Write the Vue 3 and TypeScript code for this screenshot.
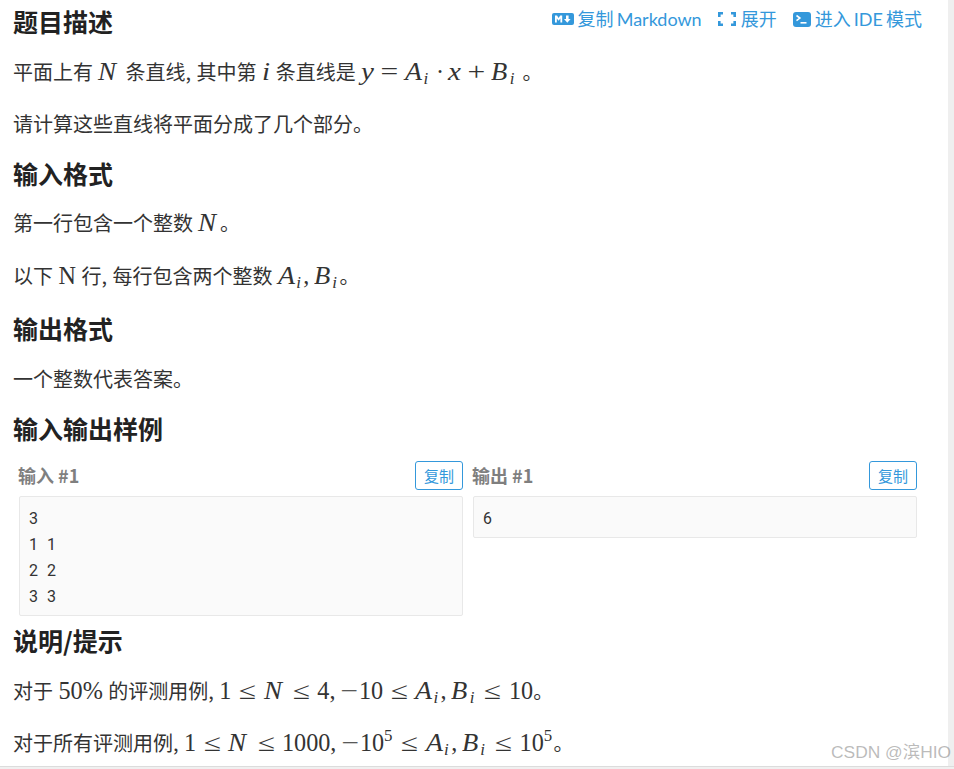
<script setup lang="ts">
const samples = [
  { title: '输入 #1', code: '3\n1 1\n2 2\n3 3' },
  { title: '输出 #1', code: '6' },
]
</script>

<template>
  <div class="page">
    <main class="content">
      <div class="head-row">
        <h2>题目描述</h2>
        <div class="actions">
          <a class="action">
            <svg width="22" height="12" viewBox="0 0 22 12"><rect width="22" height="12" rx="2" fill="#3498db"/><path d="M3 9.5V2.5h2l1.6 2.4L8.2 2.5h2v7H8.4V5.4L6.6 7.8 4.8 5.4v4.1z M14 2.5h2.6v3.4h2L15.3 9.8 12 5.9h2z" fill="#fff"/></svg>
            复制 Markdown
          </a>
          <a class="action expand">
            <svg width="18" height="14" viewBox="0 0 18 14" fill="none" stroke="#3498db" stroke-width="2.6"><path d="M1.3 5V1.3H5M13 1.3h3.7V5M16.7 9v3.7H13M5 12.7H1.3V9"/></svg>
            展开
          </a>
          <a class="action">
            <svg width="18" height="15" viewBox="0 0 18 15"><rect width="18" height="15" rx="3" fill="#3498db"/><path d="M3.5 3.5l3.4 2.6-3.4 2.6" fill="none" stroke="#fff" stroke-width="1.6"/><path d="M7.5 10.8h6" stroke="#fff" stroke-width="1.6"/></svg>
            进入 IDE 模式
          </a>
        </div>
      </div>

      <p>平面上有 <span class="m"><i class="v-n">N</i></span> 条直线, 其中第 <span class="m"><i class="v-i">i</i></span> 条直线是 <span class="m"><i class="v-y">y</i><b class="rel">=</b><i class="v-a">A</i><sub>i</sub><b class="bin dot">·</b><i class="v-x">x</i><b class="bin">+</b><i class="v-b">B</i><sub>i</sub></span> 。</p>
      <p class="before-h">请计算这些直线将平面分成了几个部分。</p>

      <h2 class="gap-20">输入格式</h2>
      <p class="gap-23">第一行包含一个整数 <span class="m"><i class="v-n">N</i></span>。</p>
      <p class="gap-22">以下 <span class="m">N</span> 行, 每行包含两个整数 <span class="m"><i class="v-a">A</i><sub>i</sub><span class="comma">,</span><i class="v-b">B</i><sub>i</sub></span>。</p>

      <h2 class="gap-21">输出格式</h2>
      <p class="before-h">一个整数代表答案。</p>

      <h2 class="gap-18">输入输出样例</h2>
      <div class="samples">
        <section v-for="s in samples" :key="s.title" class="sample">
          <div class="sample-head">
            <h3>{{ s.title }}</h3>
            <button type="button">复制</button>
          </div>
          <pre>{{ s.code }}</pre>
        </section>
      </div>

      <h2 class="gap-21">说明/提示</h2>
      <p>对于 <span class="m">50%</span> 的评测用例, <span class="m">1<b class="rel">≤</b><i class="v-n">N</i><b class="rel">≤</b>4<span class="comma">,</span><b class="minus">−</b>10<b class="rel">≤</b><i class="v-a">A</i><sub>i</sub><span class="comma">,</span><i class="v-b">B</i><sub>i</sub><b class="rel">≤</b>10</span>。</p>
      <p>对于所有评测用例, <span class="m">1<b class="rel">≤</b><i class="v-n">N</i><b class="rel">≤</b>1000<span class="comma">,</span><b class="minus">−</b>10<sup>5</sup><b class="rel">≤</b><i class="v-a">A</i><sub>i</sub><span class="comma">,</span><i class="v-b">B</i><sub>i</sub><b class="rel">≤</b>10<sup>5</sup></span>。</p>
    </main>
    <div class="scrollbar"></div>
    <div class="watermark">CSDN @滨HIO</div>
  </div>
</template>

<style>
html, body { margin: 0; background: #fff; overflow: hidden; }
</style>

<style scoped>
.page {
  position: relative;
  width: 954px;
  height: 769px;
  overflow: hidden;
  background: #fff;
  font-family: "Noto Sans CJK SC", "Liberation Sans", sans-serif;
  color: #333;
}
.page::after {
  content: "";
  position: absolute;
  left: 0;
  right: 0;
  bottom: 0;
  height: 2px;
  background: #f0f0f0;
  border-top: 1px solid #dcdcdc;
}
.content {
  padding: 6px 32px 0 13px;
}
.head-row {
  display: flex;
  justify-content: space-between;
  align-items: flex-start;
}
h2 {
  margin: 0 0 21px;
  font-size: 25px;
  line-height: 30px;
  font-weight: 700;
  color: #222;
}
h2.gap-20 { margin-bottom: 20px; }
h2.gap-21 { margin-bottom: 21px; }
h2.gap-18 { margin-bottom: 18px; }
.samples + h2 { margin-top: 9px; }
p {
  margin: 0 0 22px;
  font-size: 20px;
  word-spacing: 1px;
  line-height: 30px;
  white-space: nowrap;
}
p.before-h { margin-bottom: 19px; }
p.gap-23 { margin-bottom: 23px; }
p.gap-22 { margin-bottom: 22px; }
.actions {
  display: flex;
  gap: 16px;
  padding-top: 1px;
}
.action {
  display: flex;
  align-items: center;
  gap: 4px;
  font-family: Lato, "Noto Sans CJK SC", sans-serif;
  font-size: 18px;
  word-spacing: -1.5px;
  line-height: 24px;
  color: #3498db;
}
.action.expand { gap: 5px; }
.m {
  font-family: "Liberation Serif", serif;
  font-size: 24.2px;
  line-height: 20px;
  font-style: normal;
  color: #333;
  word-spacing: 0;
}
.m i {
  display: inline-block;
  font-style: italic;
  transform-origin: left center;
}
.v-n { width: 21.5px; transform: scaleX(1.12); }
.v-a { width: 18.2px; transform: scaleX(1.15); }
.v-b { width: 18.4px; transform: scaleX(1.1); }
.v-x { width: 13.8px; transform: scaleX(1.2); }
.v-y { width: 11.9px; transform: scaleX(1.2); }
.v-i { width: 8.3px; transform: scaleX(1.2); }
.m sub {
  font-size: 16.9px;
  font-style: italic;
  line-height: 0;
  vertical-align: -4px;
  margin-right: 2.4px;
}
.m sup {
  font-size: 16.9px;
  line-height: 0;
  vertical-align: 10px;
  margin-right: 1.2px;
}
.comma { margin-right: 4.7px; }
b.rel, b.bin, b.minus {
  display: inline-block;
  width: 18.8px;
  text-align: center;
  font-weight: 400;
  font-style: normal;
  transform: scaleX(1.3);
}
b.rel { margin: 0 6.7px; }
b.bin { margin: 0 5.4px; }
b.dot { width: 6.7px; transform: none; }
.samples {
  display: flex;
  gap: 10px;
  margin: 0 0 0 6px;
  width: 898px;
  align-items: flex-start;
}
.sample { flex: 1; min-width: 0; }
.sample-head {
  display: flex;
  justify-content: space-between;
  align-items: flex-start;
  height: 35px;
}
h3 {
  margin: 0 0 0 -1px;
  padding-top: 1px;
  font-size: 18px;
  line-height: 26px;
  color: #7f7f7f;
  font-weight: 700;
}
button {
  width: 48px;
  height: 29px;
  padding: 0;
  background: #fff;
  border: 1px solid #3498db;
  border-radius: 3px;
  color: #3498db;
  font-family: inherit;
  font-size: 15px;
}
pre {
  margin: 0;
  padding: 9px 9px 5px;
  border: 1px solid #e8e8e8;
  border-radius: 2px;
  background: #fafafa;
  font-family: Roboto, monospace;
  font-variant-numeric: tabular-nums;
  font-size: 16px;
  word-spacing: 5px;
  line-height: 26px;
  color: #333;
}
.scrollbar {
  position: absolute;
  top: 0;
  right: 0;
  bottom: 0;
  width: 6px;
  background: #efefef;
}
.watermark {
  position: absolute;
  left: 831px;
  top: 741px;
  font-family: "Liberation Sans", "Noto Sans CJK SC", sans-serif;
  font-size: 17.4px;
  line-height: 22px;
  white-space: nowrap;
  color: rgba(120, 120, 120, 0.5);
}
</style>
